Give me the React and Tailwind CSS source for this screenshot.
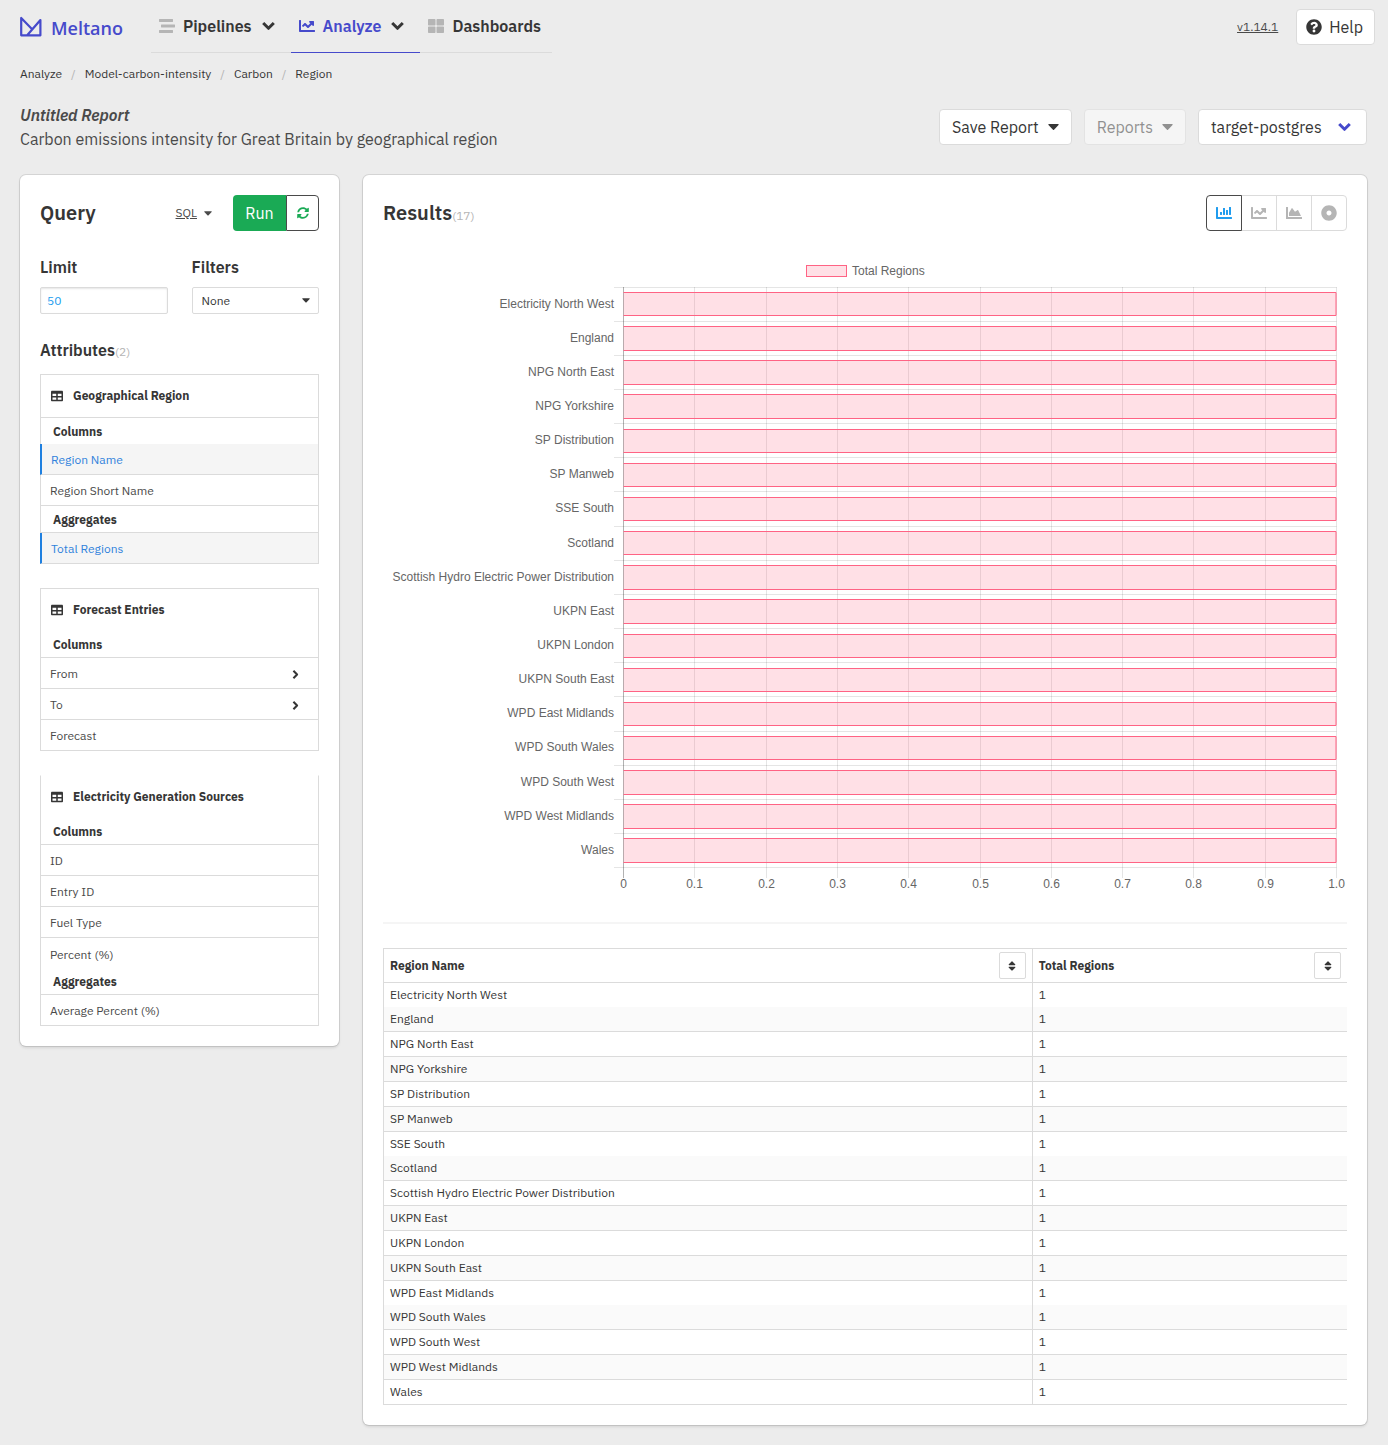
import React from "react";
import {
  FaStream, FaChartLine, FaThLarge, FaQuestionCircle, FaSyncAlt, FaTable, FaChartBar,
  FaChartArea, FaDotCircle, FaSort,
} from "react-icons/fa";

const regions = [
  "Electricity North West", "England", "NPG North East", "NPG Yorkshire", "SP Distribution",
  "SP Manweb", "SSE South", "Scotland", "Scottish Hydro Electric Power Distribution",
  "UKPN East", "UKPN London", "UKPN South East", "WPD East Midlands", "WPD South Wales",
  "WPD South West", "WPD West Midlands", "Wales",
];

function Chevron({ className }) {
  return (
    <svg viewBox="0 0 13 10" className={className} fill="none" stroke="currentColor" strokeWidth="3" strokeLinejoin="round" aria-hidden="true">
      <path d="M1.2 2L6.5 7.3 11.8 2" />
    </svg>
  );
}

function Caret({ className }) {
  return (
    <svg viewBox="0 0 11 6" className={className} fill="currentColor" aria-hidden="true">
      <path d="M0.8 0H10.2Q11 0.2 10.5 0.9L6 5.7Q5.5 6.1 5 5.7L0.5 0.9Q0 0.2 0.8 0Z" />
    </svg>
  );
}

function Logo() {
  return (
    <a href="#home" className="flex items-center gap-[9px] text-[#464acb]">
      <svg viewBox="0 0 22 21" className="h-[21px] w-[22px]" fill="none" stroke="currentColor" strokeWidth="2.2" strokeLinejoin="round" aria-hidden="true">
        <path d="M12.4 13.4L1.2 2V19.3H20.4V4L7.4 19" />
      </svg>
      <span className="pt-0.5 font-['Open_Sans'] text-lg leading-6 font-semibold">Meltano</span>
    </a>
  );
}

function NavItem({ icon, label, active, chevron }) {
  return (
    <a
      href={"#" + label.toLowerCase()}
      className={
        "flex h-[53px] items-center border-b pl-2 font-semibold " +
        (chevron ? "pr-4 " : "pr-[11px] ") +
        (active ? "border-[#464acb] text-[#464acb]" : "border-[#dbdbdb] text-[#363636]")
      }
    >
      <span className={"mr-2 " + (active ? "text-[#464acb]" : "text-[#b5b5b5]")}>{icon}</span>
      {label}
      {chevron && <Chevron className="ml-2.5 h-2.5 w-[13px] text-[#363636]" />}
    </a>
  );
}

const buttonBase = "flex h-9 items-center rounded border text-base ";

function Header() {
  return (
    <header className="flex h-[53px] items-center pr-[13px] pl-5">
      <Logo />
      <nav className="ml-7 flex">
        <NavItem icon={<FaStream className="size-4" />} label="Pipelines" chevron />
        <NavItem icon={<FaChartLine className="size-4" />} label="Analyze" chevron active />
        <NavItem icon={<FaThLarge className="size-4" />} label="Dashboards" />
      </nav>
      <a href="#version" className="ml-auto text-xs text-[#4a4a4a] underline">v1.14.1</a>
      <button className={buttonBase + "ml-[18px] gap-[7px] border-[#dbdbdb] bg-white pr-[11px] pl-[9px] text-[#363636]"}>
        <FaQuestionCircle className="size-4" />
        Help
      </button>
    </header>
  );
}

function Breadcrumb() {
  const parts = ["Analyze", "Model-carbon-intensity", "Carbon", "Region"];
  return (
    <nav aria-label="Breadcrumb" className="mt-3 text-xs leading-[18px]">
      <ol className="flex">
        {parts.map((p, i) => (
          <li key={p} className="flex">
            {i > 0 && <span className="px-[9px] text-[#b5b5b5]">/</span>}
            <a href={"#" + p} className="text-[#363636]">{p}</a>
          </li>
        ))}
      </ol>
    </nav>
  );
}

function TitleBar() {
  return (
    <div className="mt-5 flex items-center justify-between">
      <div className="leading-6">
        <h1 className="font-semibold text-[#4a4a4a] italic">Untitled Report</h1>
        <p className="text-[#4a4a4a]">Carbon emissions intensity for Great Britain by geographical region</p>
      </div>
      <div className="flex gap-3">
        <button className={buttonBase + "gap-[9px] border-[#dbdbdb] bg-white px-3 text-[#363636]"}>
          Save Report <Caret className="h-1.5 w-[11px]" />
        </button>
        <button disabled className={buttonBase + "gap-[9px] border-[#dbdbdb] bg-white px-3 text-[#363636] opacity-50"}>
          Reports <Caret className="h-1.5 w-[11px]" />
        </button>
        <div className="relative">
          <select aria-label="Connection" className="block h-9 appearance-none rounded border border-[#dbdbdb] bg-white pr-11 pl-3 text-[#363636]">
            <option>target-postgres</option>
          </select>
          <Chevron className="pointer-events-none absolute top-[13px] right-4 h-2.5 w-[13px] text-[#464acb]" />
        </div>
      </div>
    </div>
  );
}

function TableHead({ title, line }) {
  return (
    <h3 className={"flex h-[43px] items-center border-b pl-2.5 text-xs font-bold text-[#363636] " + (line ? "border-[#dbdbdb]" : "border-transparent")}>
      <FaTable className="mr-2.5 size-3" />
      {title}
    </h3>
  );
}

function GroupLabel({ children, line }) {
  return (
    <h4 className={"flex h-[27px] items-center pl-3 text-xs font-bold text-[#363636] " + (line ? "border-b border-[#dbdbdb] pt-0.5" : "")}>
      {children}
    </h4>
  );
}

function Attribute({ name, active, chevron, last }) {
  return (
    <button
      className={
        "-ml-px flex h-[31px] items-center justify-between self-stretch pt-0.5 pr-[18px] text-left text-xs " +
        (last ? "" : "border-b border-b-[#dbdbdb] ") +
        (active
          ? "border-l-2 border-l-[#1f80e0] bg-[#f5f5f5] pl-[9px] text-[#3082dc]"
          : "border-l border-l-[#dbdbdb] pl-[9px] text-[#4a4a4a]")
      }
    >
      {name}
      {chevron && <Chevron className="h-[7px] w-[9px] -rotate-90 text-[#363636]" />}
    </button>
  );
}

function Box({ children, top = true }) {
  return (
    <div className={"mb-6 flex flex-col border-x border-t border-x-[#dbdbdb] last:mb-0 " + (top ? "border-t-[#dbdbdb]" : "border-t-transparent")}>
      {children}
    </div>
  );
}

const cardClass = "self-start rounded-md bg-white p-5 shadow-[0_2px_3px_rgba(10,10,10,0.1),0_0_0_1px_rgba(10,10,10,0.1)]";

function QueryPanel() {
  return (
    <section className={cardClass}>
      <div className="flex h-9 items-center">
        <h2 className="text-xl font-semibold text-[#363636]">Query</h2>
        <button className="mr-[21px] ml-auto flex items-center gap-[7px] text-xs text-[#4a4a4a]">
          <span className="underline">SQL</span>
          <Caret className="h-[5px] w-2" />
        </button>
        <button className="h-9 w-[53px] rounded-l bg-[#1aaa55] text-white">Run</button>
        <button aria-label="Refresh" className="flex h-9 w-[33px] items-center justify-center rounded-r border border-[#4a4a4a] text-[#1aaa55]">
          <FaSyncAlt className="size-3" />
        </button>
      </div>

      <div className="mt-6 grid grid-cols-2 gap-6">
        <div>
          <label htmlFor="limit" className="block leading-6 font-semibold text-[#363636]">Limit</label>
          <input id="limit" defaultValue="50" className="mt-2 block h-[27px] w-full rounded-xs border border-[#dbdbdb] px-1.5 text-xs text-[#209cee] shadow-[inset_0_1px_2px_rgba(10,10,10,0.1)]" />
        </div>
        <div>
          <label htmlFor="filters" className="block leading-6 font-semibold text-[#363636]">Filters</label>
          <div className="relative mt-2">
            <select id="filters" className="block h-[27px] w-full appearance-none rounded-xs border border-[#dbdbdb] bg-white pl-[9px] text-xs text-[#363636]">
              <option>None</option>
            </select>
            <Caret className="pointer-events-none absolute top-[11px] right-[9px] h-[5px] w-2 text-[#363636]" />
          </div>
        </div>
      </div>

      <h3 className="mt-6 mb-3 leading-6 font-semibold text-[#363636]">
        Attributes<span className="text-xs font-normal text-[#b5b5b5]">(2)</span>
      </h3>

      <div>
        <Box>
          <TableHead title="Geographical Region" line />
          <div className="-mb-px"><GroupLabel>Columns</GroupLabel></div>
          <Attribute name="Region Name" active />
          <Attribute name="Region Short Name" />
          <GroupLabel line>Aggregates</GroupLabel>
          <Attribute name="Total Regions" active />
        </Box>
        <Box>
          <TableHead title="Forecast Entries" />
          <div className="-mt-px"><GroupLabel line>Columns</GroupLabel></div>
          <Attribute name="From" chevron />
          <Attribute name="To" chevron />
          <Attribute name="Forecast" />
        </Box>
        <Box top={false}>
          <TableHead title="Electricity Generation Sources" />
          <div className="-mt-px"><GroupLabel line>Columns</GroupLabel></div>
          <Attribute name="ID" />
          <Attribute name="Entry ID" />
          <Attribute name="Fuel Type" />
          <div className="-mb-px flex flex-col"><Attribute name="Percent (%)" last /></div>
          <GroupLabel line>Aggregates</GroupLabel>
          <Attribute name="Average Percent (%)" />
        </Box>
      </div>
    </section>
  );
}

function BarChart() {
  const left = 240.5, right = 953.5, top = 32.5, step = 34.15;
  const ticks = ["0", "0.1", "0.2", "0.3", "0.4", "0.5", "0.6", "0.7", "0.8", "0.9", "1.0"];
  const bottom = top + step * regions.length;
  return (
    <svg viewBox="0 0 964 643" className="mt-6 block w-full font-['Liberation_Sans'] text-xs" fill="#666" role="img" aria-label="Total Regions by region name">
      <rect x="423.5" y="10.5" width="40" height="11" fill="rgba(255,99,132,0.2)" stroke="#ff6384" />
      <text x="469" y="20">Total Regions</text>
      {[...regions, ""].map((r, i) => {
        const y = Math.floor(top + step * i - 0.4) + 0.5;
        return <path key={i} d={`M231 ${y}H${right}`} stroke="rgba(0,0,0,0.1)" />;
      })}
      {ticks.map((t, i) => {
        const x = Math.round(left + 71.3 * i - 0.5) + 0.5;
        return (
          <g key={t}>
            <path d={`M${x} 32V${bottom + 10}`} stroke={i === 0 ? "rgba(0,0,0,0.3)" : "rgba(0,0,0,0.1)"} />
            <text x={x} y="633" textAnchor="middle">{t}</text>
          </g>
        );
      })}
      {regions.map((r, i) => {
        const y = Math.round(top + step * i + 4.5) + 0.5;
        const end = Math.round(top + step * i + 27.9) + 0.5;
        return (
          <g key={r}>
            <text x="231" y={Math.round(top + step * i + 20)} textAnchor="end">{r}</text>
            <rect x={left} y={y} width={right - left} height={end - y} fill="rgba(255,99,132,0.2)" />
            <path d={`M${left} ${y}H${right - 0.5}V${end}H${left}`} fill="none" stroke="#ff6384" />
          </g>
        );
      })}
    </svg>
  );
}

function ChartTypes() {
  const types = [["Bar chart", FaChartBar], ["Line chart", FaChartLine], ["Area chart", FaChartArea], ["Doughnut chart", FaDotCircle]];
  return (
    <div className="flex">
      {types.map(([label, Icon], i) => (
        <button
          key={label}
          aria-label={label}
          aria-pressed={i === 0}
          className={
            "-ml-px flex h-9 w-9 items-center justify-center border first:rounded-l last:rounded-r " +
            (i === 0 ? "relative z-10 border-[#4a4a4a] text-[#209cee]" : "border-[#dbdbdb] text-[#b5b5b5]")
          }
        >
          <Icon className="size-4" />
        </button>
      ))}
    </div>
  );
}

function ResultsTable() {
  return (
    <table className="w-full table-fixed border-separate border-spacing-0 text-xs text-[#363636]">
      <colgroup>
        <col className="w-[67.3%]" />
        <col />
      </colgroup>
      <thead>
        <tr>
          {["Region Name", "Total Regions"].map((h) => (
            <th key={h} className="h-[35px] border-y border-l border-[#dbdbdb] p-0 pr-1.5 pl-1.5 text-left font-bold">
              <div className="flex items-center justify-between">
                {h}
                <button aria-label={"Sort by " + h} className="flex size-[27px] items-center justify-center rounded-xs border border-[#dbdbdb]">
                  <FaSort className="size-3" />
                </button>
              </div>
            </th>
          ))}
        </tr>
      </thead>
      <tbody>
        {regions.map((r, i) => {
          const cell = "border-l border-[#dbdbdb] p-0 pl-1.5 " + (i % 6 === 0 && i < 16 ? "h-6" : "h-[25px] border-b");
          return (
            <tr key={r} className="even:bg-[#fafafa]">
              <td className={cell}>{r}</td>
              <td className={cell}>1</td>
            </tr>
          );
        })}
      </tbody>
    </table>
  );
}

function ResultsPanel() {
  return (
    <section className={cardClass + " min-w-0"}>
      <div className="flex h-9 items-center justify-between">
        <h2 className="text-xl font-semibold text-[#363636]">
          Results<span className="text-xs font-normal text-[#b5b5b5]">(17)</span>
        </h2>
        <ChartTypes />
      </div>
      <BarChart />
      <hr className="my-6 h-[2px] border-0 bg-[#f5f5f5]" />
      <ResultsTable />
    </section>
  );
}

export default function App() {
  return (
    <div className="min-h-screen bg-[#ececec] font-['IBM_Plex_Sans','Roboto',sans-serif] text-base">
      <Header />
      <main className="pr-[21px] pb-5 pl-5">
        <Breadcrumb />
        <TitleBar />
        <div className="mt-6 grid grid-cols-[319fr_1004fr] gap-6">
          <QueryPanel />
          <ResultsPanel />
        </div>
      </main>
    </div>
  );
}
